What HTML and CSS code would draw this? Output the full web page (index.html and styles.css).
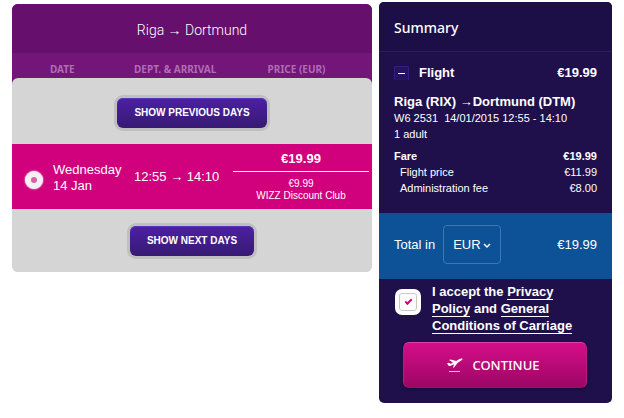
FILE: index.html
```html
<!DOCTYPE html>
<html lang="en">

<head>
  <meta charset="utf-8">
  <meta name="viewport" content="width=device-width, initial-scale=1">
  <title>Select flight</title>
  <link rel="stylesheet" href="styles.css">
</head>

<body>
  <div class="page">
    <!-- flights -->
    <section class="flights">
      <h1 class="flights-title">Riga → Dortmund</h1>
      <table class="flights-table">
        <thead>
          <tr>
            <th class="col-radio"></th>
            <th class="col-date">Date</th>
            <th class="col-time">Dept. &amp; arrival</th>
            <th class="col-price">Price (EUR)</th>
          </tr>
        </thead>
        <tbody>
          <tr>
            <td class="more more-prev" colspan="4"><button type="button" class="btn-days">Show previous days</button></td>
          </tr>
          <tr class="selected">
            <td class="cell-radio"><input type="radio" class="radio" id="flight1" name="flight" checked></td>
            <td class="cell-date"><label for="flight1">Wednesday<br>14 Jan</label></td>
            <td>12:55 → 14:10</td>
            <td class="cell-price">
              <div class="price">€19.99</div>
              <div class="price-club">€9.99<br>WIZZ Discount Club</div>
            </td>
          </tr>
          <tr>
            <td class="more more-next" colspan="4"><button type="button" class="btn-days">Show next days</button></td>
          </tr>
        </tbody>
      </table>
    </section>

    <!-- summary -->
    <aside class="summary">
      <h2 class="summary-title">Summary</h2>
      <div class="details">
        <div class="flight-head">
          <button type="button" class="toggle" aria-label="Hide flight details"></button>
          <span class="flight-name">Flight</span>
          <span>€19.99</span>
        </div>
        <div class="route">Riga (RIX) →Dortmund (DTM)</div>
        <div>W6 2531 &nbsp;14/01/2015 12:55 - 14:10</div>
        <div>1 adult</div>
        <table class="fare">
          <tr class="fare-total">
            <th>Fare</th>
            <td>€19.99</td>
          </tr>
          <tr>
            <th>Flight price</th>
            <td>€11.99</td>
          </tr>
          <tr>
            <th>Administration fee</th>
            <td>€8.00</td>
          </tr>
        </table>
      </div>
      <div class="total">
        <label for="currency">Total in</label>
        <div class="currency">
          <select id="currency">
            <option>EUR</option>
            <option>GBP</option>
          </select>
          <svg class="arrow" width="8" height="6" viewBox="0 0 8 6"><path d="M1 1l3 3 3-3" fill="none" stroke="#fff" stroke-width="1.500"/></svg>
        </div>
        <span class="total-price">€19.99</span>
      </div>
      <div class="accept">
        <input type="checkbox" class="check" id="accept" checked>
        <label for="accept">I accept the <a href="#">Privacy Policy</a> and <a href="#">General Conditions of Carriage</a></label>
      </div>
      <button type="button" class="btn-continue">
        <svg width="17" height="15" viewBox="0 0 17 15">
          <path d="M1 5.500l1.500-.7 2.200 1 2.300-1.100L3 2.100l1.700-.7 5.500 1.600 3.300-1.900c1.100-.7 2.600-.8 3-.3.300.600-.6 1.500-1.700 2L11.500 4.900 8.200 9.300l-1.300.6 1.200-3.600-3.500 1.500c-1 .4-1.600.2-2.100-.4z" fill="#fff"/>
          <path d="M3 13.500h11" stroke="#f3b9dc" stroke-width="1"/>
        </svg>
        Continue
      </button>
    </aside>
  </div>
</body>

</html>
```
FILE: styles.css
```css
* {
  padding: 0;
  margin: 0;
  box-sizing: border-box;
}

body {
  background-color: #fff;
  color: #fff;
  font-family: "Liberation Sans", Arial, sans-serif;
  font-size: 13px;
  line-height: 16px;
}

button,
select {
  font-family: inherit;
  color: inherit;
  cursor: pointer;
}

table {
  width: 100%;
  border-spacing: 0;
}

.page {
  display: flex;
  align-items: flex-start;
  gap: 7px;
  padding: 2px 12px;
}

/* flights */
.flights {
  flex: 360 1 0;
  margin-top: 2px;
  border-radius: 6px;
  overflow: hidden;
  background: linear-gradient(#731579 100px, #d5d5d5 100px);
}

.flights-title {
  padding-top: 4px;
  background-color: #660f6c;
  font: 300 14px/45px Roboto, "Noto Sans", sans-serif;
  text-align: center;
}

.flights-table {
  table-layout: fixed;
}

.flights-table th {
  padding-top: 7px;
  color: #b06db5;
  font: 700 10px/18px "Noto Sans", "Open Sans", sans-serif;
  text-align: left;
  text-transform: uppercase;
  white-space: nowrap;
}

.col-radio {
  width: 38px;
}

.col-date {
  width: 84px;
}

.col-time {
  width: 99px;
}

.flights-table .col-price {
  padding-right: 12px;
  text-align: center;
}

.more {
  background-color: #d5d5d5;
  text-align: center;
}

.more-prev {
  height: 66px;
  padding-top: 3px;
  border-radius: 6px 6px 0 0;
}

.more-next {
  height: 63px;
}

.btn-days {
  height: 30px;
  padding: 0 17px;
  border: 0;
  border-radius: 6px;
  background: linear-gradient(#4c20a4, #371a72);
  box-shadow: 0 0 0 3px #bfbfbf, inset 0 1px 0 #5a35c0;
  font-size: 10px;
  font-weight: 700;
  text-transform: uppercase;
}

.selected td {
  height: 65px;
  background-color: #d1007d;
}

.cell-radio {
  padding: 6px 0 0 13px;
}

.radio {
  display: block;
  appearance: none;
  width: 18px;
  height: 18px;
  border: 6px solid #f6f0f4;
  border-radius: 50%;
  background-color: #d564a6;
  box-shadow: 0 0 2px #fff;
}

.cell-date {
  padding: 3px 0 0 3px;
}

.cell-price {
  padding-right: 3px;
  text-align: center;
}

.price {
  padding-bottom: 4px;
  border-bottom: 1px solid #fff;
  font-weight: 700;
}

.price-club {
  padding-top: 6px;
  font-size: 10px;
  line-height: 12px;
}

/* summary */
.summary {
  flex: 233 1 0;
  padding-bottom: 15px;
  border-radius: 5px;
  background-color: #1f104c;
  overflow: hidden;
}

.summary-title {
  padding: 2px 15px 0;
  border-bottom: 1px solid #2c1d5c;
  background-color: #1c0e47;
  font: 500 14px/47px "Noto Sans", "Open Sans", sans-serif;
}

.details {
  padding: 13px 15px 17px;
  font-size: 11px;
}

.flight-head {
  display: flex;
  align-items: center;
  margin-bottom: 13px;
  font-size: 13px;
  font-weight: 700;
}

.toggle {
  width: 15px;
  height: 15px;
  padding: 0 3px;
  border: 1px solid #32208a;
  border-bottom-color: #1f104c;
  border-radius: 2px;
  background-color: #27125f;
}

.toggle::before {
  content: "";
  display: block;
  height: 1px;
  background-color: #fff;
}

.flight-name {
  flex: 1;
  padding-left: 10px;
}

.route {
  font-size: 13px;
  font-weight: 700;
}

.fare {
  margin-top: 6px;
}

.fare th {
  padding-left: 6px;
  font-weight: 400;
  text-align: left;
}

.fare td {
  text-align: right;
}

.fare-total {
  font-weight: 700;
}

.fare .fare-total th {
  padding-left: 0;
  font-weight: 700;
}

.total {
  display: flex;
  align-items: center;
  gap: 8px;
  padding: 12px 15px 15px;
  background-color: #0d5196;
}

.currency {
  position: relative;
}

.currency select {
  appearance: none;
  display: block;
  width: 58px;
  height: 39px;
  padding: 0 9px;
  border: 1px solid #3c79b4;
  border-radius: 4px;
  background-color: transparent;
  font-size: 13px;
}

.arrow {
  position: absolute;
  right: 10px;
  top: 18px;
  pointer-events: none;
}

.total-price {
  margin-left: auto;
}

.accept {
  display: flex;
  align-items: flex-start;
  gap: 11px;
  padding: 4px 30px 8px 16px;
  font-weight: 700;
  line-height: 17px;
}

.accept a {
  border-bottom: 1px solid #fff;
  color: inherit;
  text-decoration: none;
}

.check {
  appearance: none;
  flex: none;
  display: flex;
  align-items: center;
  justify-content: center;
  width: 26px;
  height: 26px;
  margin-top: 6px;
  border: 4px solid #fff;
  border-radius: 7px;
  background-color: #fff;
  box-shadow: inset 0 0 0 1px #c8c8c8;
}

.check:checked::before {
  content: "";
  width: 7px;
  height: 4px;
  margin-bottom: 2px;
  box-sizing: border-box;
  border: solid #d1007d;
  border-width: 0 0 2px 2px;
  transform: rotate(-45deg);
}

.btn-continue {
  display: flex;
  align-items: center;
  justify-content: center;
  gap: 9px;
  width: calc(100% - 49px);
  height: 46px;
  margin-left: 24px;
  padding-right: 4px;
  border: 1px solid #d83d9c;
  border-color: #e0409f #bd1a80 #a50a6c;
  border-radius: 6px;
  background: linear-gradient(#d60d8a, #9c0765);
  box-shadow: 0 1px 3px #14082f;
  font: 500 13px/20px "Noto Sans", "Open Sans", sans-serif;
  text-transform: uppercase;
}
```
